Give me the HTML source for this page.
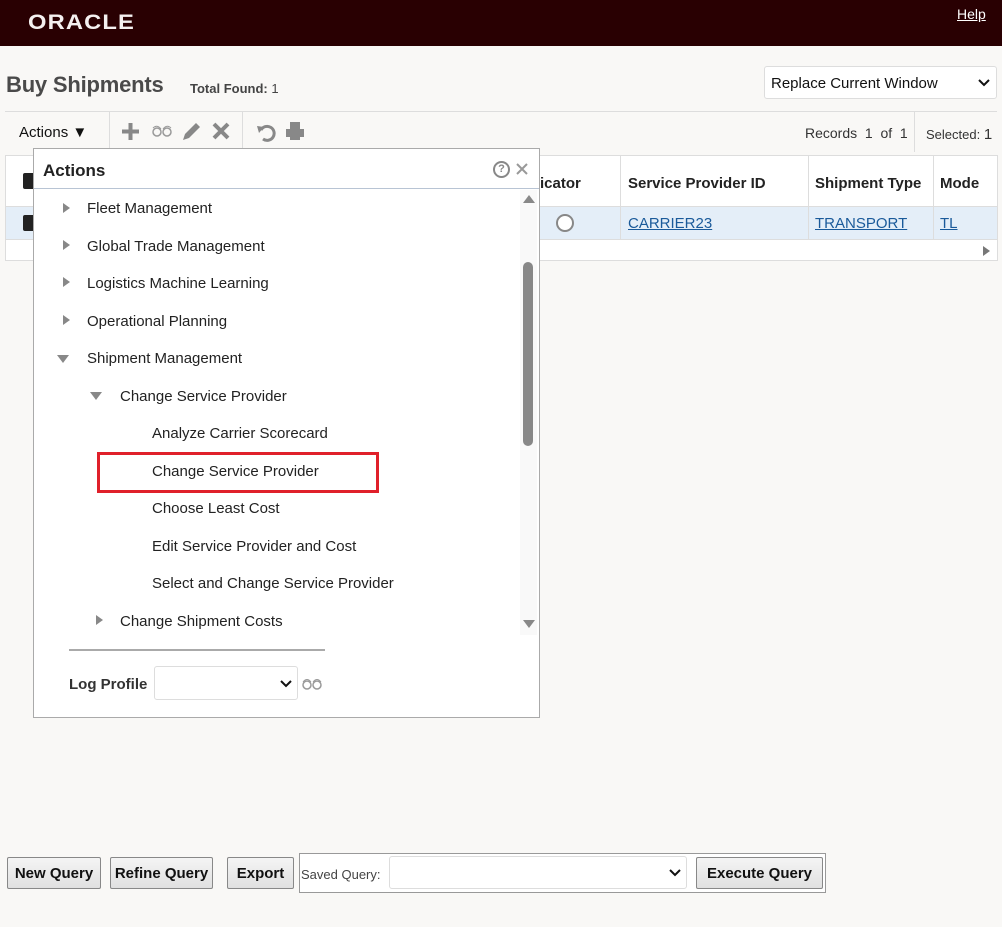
<!DOCTYPE html>
<html><head><meta charset="utf-8"><style>
*{box-sizing:border-box;margin:0;padding:0}
body{width:1002px;height:927px;background:#f9f8f6;font-family:"Liberation Sans",sans-serif;position:relative;overflow:hidden;color:#222}
.a{position:absolute}
.hdr{left:0;top:0;width:1002px;height:46px;background:#290002}
.t{white-space:nowrap}
.tri{width:0;height:0;border-top:5px solid transparent;border-bottom:5px solid transparent;border-left:7px solid #888}
.trid{width:0;height:0;border-left:6px solid transparent;border-right:6px solid transparent;border-top:8px solid #888}
.it{font-size:15px;color:#222}
.btn{top:857px;height:32px;border:1px solid #888;border-radius:2px;background:linear-gradient(#f4f4f4,#e0e0e0);font-weight:bold;font-size:15px;text-align:center;line-height:32px;color:#111}
a{color:#1a5a9a;text-decoration:underline}
.cb{width:16px;height:16px;background:#222;border-radius:2px}
</style></head><body>
<div class="a hdr"></div>
<div class="a t" style="left:28px;top:11px;color:#f4f0f0;font-size:21px;font-weight:bold;letter-spacing:1px;transform:scaleX(1.13);transform-origin:left">ORACLE</div>
<div class="a t" style="left:957px;top:6px;color:#fff;font-size:14px;text-decoration:underline">Help</div>

<div class="a t" style="left:6px;top:72px;font-size:22px;font-weight:bold;color:#4a4a4a;letter-spacing:-0.2px">Buy Shipments</div>
<div class="a t" style="left:190px;top:81px;font-size:13px;font-weight:bold;color:#444">Total Found: <span style="font-weight:normal">1</span></div>
<div class="a" style="left:764px;top:66px;width:233px;height:33px;background:#fff;border:1px solid #ddd;border-radius:3px"></div>
<div class="a t" style="left:771px;top:75px;font-size:15px;color:#111">Replace Current Window</div>
<svg class="a" style="left:978px;top:78px" width="12" height="10"><path d="M1 2l5 5 5-5" stroke="#111" stroke-width="2" fill="none"/></svg>
<div class="a" style="left:5px;top:111px;width:992px;height:1px;background:#ddd"></div>

<div class="a t" style="left:19px;top:124px;font-size:15px;color:#111">Actions ▼</div>
<div class="a" style="left:109px;top:112px;width:1px;height:36px;background:#ddd"></div>
<div class="a" style="left:242px;top:112px;width:1px;height:36px;background:#ddd"></div>
<svg class="a" style="left:121px;top:122px" width="19" height="19"><path d="M9.5 1v17M1 9.5h17" stroke="#888" stroke-width="4"/></svg>
<svg class="a" style="left:151px;top:124px" width="22" height="14"><circle cx="6" cy="8" r="4" stroke="#999" stroke-width="1.5" fill="none"/><circle cx="16" cy="8" r="4" stroke="#999" stroke-width="1.5" fill="none"/><path d="M2 4Q6 0 10 5M12 5Q16 0 20 4" stroke="#999" fill="none"/></svg>
<svg class="a" style="left:181px;top:121px" width="21" height="21"><path d="M2 19l2-6 11-11 4 4-11 11z" fill="#888"/></svg>
<svg class="a" style="left:211px;top:122px" width="20" height="18"><path d="M3 2l14 14M17 2L3 16" stroke="#888" stroke-width="4"/></svg>
<svg class="a" style="left:255px;top:122px" width="22" height="20"><path d="M6 8a7 7 0 1 1 2 9" stroke="#888" stroke-width="3" fill="none"/><path d="M2 4l7 1-5 6z" fill="#888"/></svg>
<svg class="a" style="left:284px;top:120px" width="22" height="22"><rect x="6" y="2" width="10" height="7" fill="#888"/><rect x="2" y="9" width="18" height="8" fill="#888"/><rect x="6" y="15" width="10" height="5" fill="#888"/></svg>
<div class="a t" style="left:805px;top:125px;font-size:14px;color:#333">Records &nbsp;1 &nbsp;of &nbsp;1</div>
<div class="a" style="left:914px;top:112px;width:1px;height:40px;background:#ddd"></div>
<div class="a t" style="left:926px;top:126px;font-size:13px;color:#333">Selected: <span style="font-size:15px">1</span></div>

<div class="a" style="left:5px;top:155px;width:993px;height:106px;background:#fff;border:1px solid #ddd"></div>
<div class="a" style="left:6px;top:206px;width:991px;height:34px;background:#e4eef8;border-top:1px solid #ddd;border-bottom:1px solid #ddd"></div>
<div class="a" style="left:620px;top:156px;width:1px;height:84px;background:#ddd"></div>
<div class="a" style="left:808px;top:156px;width:1px;height:84px;background:#ddd"></div>
<div class="a" style="left:933px;top:156px;width:1px;height:84px;background:#ddd"></div>
<div class="a cb" style="left:23px;top:173px"></div>
<div class="a cb" style="left:23px;top:215px"></div>
<div class="a t" style="left:540px;top:175px;font-size:15px;font-weight:bold;color:#222">icator</div>
<div class="a t" style="left:628px;top:175px;font-size:15px;font-weight:bold;color:#222">Service Provider ID</div>
<div class="a t" style="left:815px;top:175px;font-size:15px;font-weight:bold;color:#222">Shipment Type</div>
<div class="a t" style="left:940px;top:175px;font-size:15px;font-weight:bold;color:#222">Mode</div>
<div class="a" style="left:556px;top:214px;width:18px;height:18px;border:2px solid #888;border-radius:50%;background:#fff"></div>
<a class="a t" style="left:628px;top:215px;font-size:15px">CARRIER23</a>
<a class="a t" style="left:815px;top:215px;font-size:15px">TRANSPORT</a>
<a class="a t" style="left:940px;top:215px;font-size:15px">TL</a>
<div class="a tri" style="left:983px;top:246px;border-left-color:#777"></div>

<!-- popup -->
<div class="a" style="left:33px;top:148px;width:507px;height:570px;background:#fff;border:1px solid #aaa"></div>
<div class="a" style="left:34px;top:188px;width:505px;height:1px;background:#b8c4d4"></div>
<div class="a t" style="left:43px;top:161px;font-size:17px;font-weight:bold;color:#222">Actions</div>
<div class="a" style="left:493px;top:161px;width:17px;height:17px;border:2px solid #888;border-radius:50%;font-size:11px;font-weight:bold;color:#888;text-align:center;line-height:13px">?</div>
<svg class="a" style="left:515px;top:162px" width="14" height="14"><path d="M2 2l10 10M12 2L2 12" stroke="#999" stroke-width="2"/></svg>
<div class="a" style="left:520px;top:190px;width:17px;height:445px;background:#f9f9f9"></div>
<div class="a" style="left:523px;top:195px;border-left:6px solid transparent;border-right:6px solid transparent;border-bottom:8px solid #888"></div>
<div class="a" style="left:523px;top:262px;width:10px;height:184px;background:#888;border-radius:5px"></div>
<div class="a trid" style="left:523px;top:620px"></div>

<div class="a tri" style="left:63px;top:203px"></div><div class="a t it" style="left:87px;top:200px">Fleet Management</div>
<div class="a tri" style="left:63px;top:240px"></div><div class="a t it" style="left:87px;top:238px">Global Trade Management</div>
<div class="a tri" style="left:63px;top:277px"></div><div class="a t it" style="left:87px;top:275px">Logistics Machine Learning</div>
<div class="a tri" style="left:63px;top:315px"></div><div class="a t it" style="left:87px;top:313px">Operational Planning</div>
<div class="a trid" style="left:57px;top:355px"></div><div class="a t it" style="left:87px;top:350px">Shipment Management</div>
<div class="a trid" style="left:90px;top:392px"></div><div class="a t it" style="left:120px;top:388px">Change Service Provider</div>
<div class="a t it" style="left:152px;top:425px">Analyze Carrier Scorecard</div>
<div class="a" style="left:97px;top:452px;width:282px;height:41px;border:3px solid #e0202a"></div>
<div class="a t it" style="left:152px;top:463px">Change Service Provider</div>
<div class="a t it" style="left:152px;top:500px">Choose Least Cost</div>
<div class="a t it" style="left:152px;top:538px">Edit Service Provider and Cost</div>
<div class="a t it" style="left:152px;top:575px">Select and Change Service Provider</div>
<div class="a tri" style="left:96px;top:615px"></div><div class="a t it" style="left:120px;top:613px">Change Shipment Costs</div>
<div class="a" style="left:69px;top:649px;width:256px;height:2px;background:#aaa"></div>
<div class="a t" style="left:69px;top:676px;font-size:15px;font-weight:bold;color:#333">Log Profile</div>
<div class="a" style="left:154px;top:666px;width:144px;height:34px;border:1px solid #ddd;border-radius:3px;background:#fff"></div>
<svg class="a" style="left:280px;top:679px" width="12" height="10"><path d="M1 2l5 5 5-5" stroke="#111" stroke-width="2" fill="none"/></svg>
<svg class="a" style="left:302px;top:677px" width="20" height="14"><circle cx="5" cy="8" r="4" stroke="#999" stroke-width="1.5" fill="none"/><circle cx="15" cy="8" r="4" stroke="#999" stroke-width="1.5" fill="none"/><path d="M1 5Q5 0 9 5M11 5Q15 0 19 5" stroke="#999" fill="none"/></svg>

<!-- bottom -->
<div class="a btn" style="left:7px;width:94px">New Query</div>
<div class="a btn" style="left:110px;width:103px">Refine Query</div>
<div class="a btn" style="left:227px;width:67px">Export</div>
<div class="a" style="left:299px;top:853px;width:527px;height:40px;border:1px solid #999;background:#fff"></div>
<div class="a t" style="left:301px;top:867px;font-size:13px;color:#444">Saved Query:</div>
<div class="a" style="left:389px;top:856px;width:298px;height:33px;border:1px solid #ddd;border-radius:3px;background:#fff"></div>
<svg class="a" style="left:669px;top:868px" width="12" height="10"><path d="M1 2l5 5 5-5" stroke="#111" stroke-width="2" fill="none"/></svg>
<div class="a btn" style="left:696px;width:127px">Execute Query</div>
</body></html>
